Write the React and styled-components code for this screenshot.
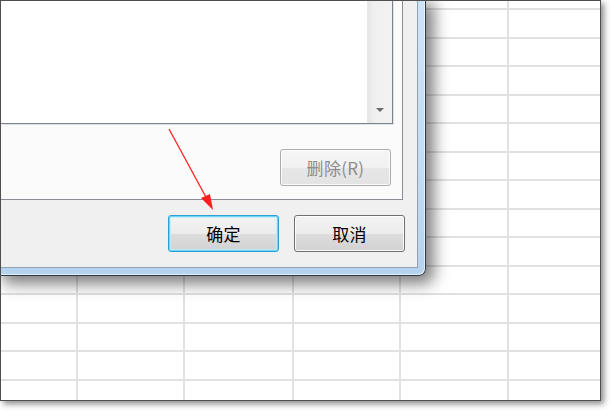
import React from "react";
import styled, { createGlobalStyle } from "styled-components";

const Global = createGlobalStyle`
  html, body { margin: 0; padding: 0; background: #ffffff; }
  body { font-family: "Noto Sans CJK SC", "Noto Sans", sans-serif; }
  * { box-sizing: border-box; }
`;

const Frame = styled.div`
  position: relative;
  width: 601px;
  height: 401px;
  border: 1px solid #4f4f4f;
  background: #ffffff;
  overflow: hidden;
  box-shadow: 3px 3px 6px rgba(0, 0, 0, 0.45);
`;

const Outer = styled.div`
  width: 611px;
  height: 411px;
`;

const Sheet = styled.div`
  display: grid;
  grid-template-columns: 77px 107px 109px 107px 108px 1fr;
  grid-template-rows: 9px repeat(14, 28.5px);
  width: 100%;
  height: 100%;
`;

const Cell = styled.div`
  border-right: 2px solid #e1e1e1;
  border-bottom: 2px solid #e1e1e1;
  &:nth-child(6n) { border-right: none; }
`;

const Dialog = styled.div`
  position: absolute;
  left: 0;
  top: 0;
  display: flex;
  padding: 0 7px 7px 0;
  background: linear-gradient(180deg, #cde3f7 0%, #c3dcf3 60%, #b5d2ee 100%);
  border-right: 1px solid #2e3a46;
  border-bottom: 1px solid #2e3a46;
  border-bottom-right-radius: 7px;
  box-shadow: inset -1px -1px 0 rgba(255, 255, 255, 0.6), 5px 5px 15px 3px rgba(0, 0, 0, 0.5);
`;

const Client = styled.div`
  width: 417px;
  height: 267px;
  display: flex;
  flex-direction: column;
  background: #f0f0f0;
  border-right: 1px solid #8fa2b6;
  border-bottom: 1px solid #8fa2b6;
`;

const TabPanel = styled.div`
  width: 402px;
  height: 199px;
  display: flex;
  flex-direction: column;
  background: #fbfbfb;
  border-right: 1px solid #8a8d94;
  border-bottom: 1px solid #8a8d94;
`;

const ListBox = styled.div`
  width: 392px;
  height: 123px;
  display: flex;
  background: #ffffff;
  border-right: 1px solid #7e838c;
  border-bottom: 1px solid #7e838c;
  box-shadow: 1px 1px 0 #dfe2e6;
`;

const ListItems = styled.div`
  flex: 1;
`;

const ScrollBar = styled.div`
  width: 25px;
  display: flex;
  flex-direction: column;
  justify-content: flex-end;
  align-items: center;
  padding-bottom: 11px;
  background: linear-gradient(90deg, #e6e6e6 0%, #f0f0f0 25%, #f2f2f2 100%);
  border-left: 1px solid #e9e9e9;
`;

const Arrow = styled.div`
  width: 0;
  height: 0;
  border-left: 4px solid transparent;
  border-right: 4px solid transparent;
  border-top: 4px solid #6b6b6b;
`;

const Button = styled.div`
  width: 111px;
  height: 37px;
  display: flex;
  align-items: center;
  justify-content: center;
  border-radius: 3px;
  font-size: 17px;
  font-weight: 400;
  letter-spacing: 0.3px;
  color: ${(p) => (p.$disabled ? "#8d8d8d" : "#000000")};
  border: 1px solid ${(p) => (p.$default ? "#2f9fd6" : p.$disabled ? "#a9acaf" : "#707070")};
  background: ${(p) =>
    p.$disabled
      ? "linear-gradient(180deg, #f5f5f5 0%, #f1f1f1 50%, #e6e6e6 51%, #e3e3e3 100%)"
      : "linear-gradient(180deg, #f3f3f3 0%, #ececec 50%, #dddddd 51%, #d2d2d2 100%)"};
  box-shadow: ${(p) =>
    p.$default
      ? "inset 0 0 0 1px #6fd3f5, inset 0 0 0 2px rgba(190, 240, 252, 0.8)"
      : "inset 0 0 0 1px rgba(255,255,255,0.85)"};
`;

const DeleteRow = styled.div`
  display: flex;
  justify-content: flex-end;
  padding-right: 11px;
  margin-top: 25px;
`;

const ButtonRow = styled.div`
  display: flex;
  justify-content: flex-end;
  gap: 15px;
  padding-right: 12px;
  margin-top: 15px;
`;

const Overlay = styled.svg`
  position: absolute;
  left: 0;
  top: 0;
  pointer-events: none;
`;

export default function App() {
  const cells = Array.from({ length: 6 * 15 });
  return (
    <>
      <Global />
      <Outer>
        <Frame>
          <Sheet>
            {cells.map((_, i) => (
              <Cell key={i} />
            ))}
          </Sheet>
          <Dialog>
            <Client>
              <TabPanel>
                <ListBox>
                  <ListItems />
                  <ScrollBar>
                    <Arrow />
                  </ScrollBar>
                </ListBox>
                <DeleteRow>
                  <Button $disabled>删除(R)</Button>
                </DeleteRow>
              </TabPanel>
              <ButtonRow>
                <Button $default>确定</Button>
                <Button>取消</Button>
              </ButtonRow>
            </Client>
          </Dialog>
          <Overlay width="601" height="401" viewBox="0 0 601 401">
            <line x1="168" y1="128" x2="206" y2="198" stroke="#ff2a2a" strokeWidth="1.4" />
            <polygon points="212,209 200,197 209,193" fill="#ff1e1e" />
          </Overlay>
        </Frame>
      </Outer>
    </>
  );
}
